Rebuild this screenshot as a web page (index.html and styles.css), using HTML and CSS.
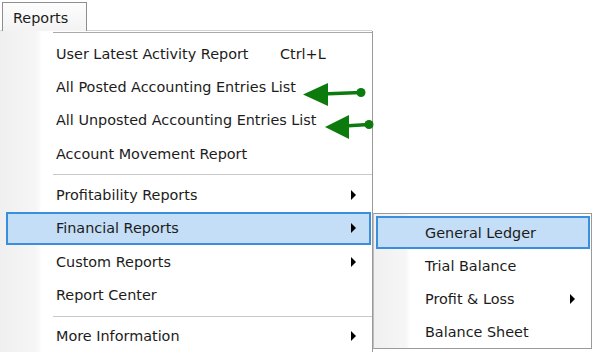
FILE: index.html
```html
<!DOCTYPE html>
<html lang="en">
<head>
	<meta charset="UTF-8">
	<title>Reports menu</title>
	<link rel="stylesheet" href="styles.css">
</head>
<body>
<!-- tab strip -->
	<div class="tabbar">
		<div class="tab">Reports</div>
	</div>
<!-- menus -->
	<div class="menus">
		<div class="menu main">
			<div class="menu-top"></div>
			<div class="item"><span class="label">User Latest Activity Report</span><span class="key">Ctrl+L</span></div>
			<div class="item"><span class="label">All Posted Accounting Entries List</span></div>
			<div class="item"><span class="label">All Unposted Accounting Entries List</span></div>
			<div class="item"><span class="label">Account Movement Report</span></div>
			<div class="sep"></div>
			<div class="item"><span class="label">Profitability Reports</span><span class="arrow"></span></div>
			<div class="item active"><span class="label">Financial Reports</span><span class="arrow"></span></div>
			<div class="item"><span class="label">Custom Reports</span><span class="arrow"></span></div>
			<div class="item"><span class="label">Report Center</span></div>
			<div class="sep"></div>
			<div class="item"><span class="label">More Information</span><span class="arrow"></span></div>
		</div>
		<div class="menu sub">
			<div class="item active"><span class="label">General Ledger</span></div>
			<div class="item"><span class="label">Trial Balance</span></div>
			<div class="item"><span class="label">Profit &amp; Loss</span><span class="arrow"></span></div>
			<div class="item"><span class="label">Balance Sheet</span></div>
		</div>
	</div>
<!-- green pointers -->
	<svg class="marks" width="592" height="352" viewBox="0 0 592 352">
		<g fill="#0d7a0d" stroke="#0d7a0d">
			<line x1="361" y1="92.5" x2="322" y2="94" stroke-width="3.5"/>
			<polygon points="303,94.5 328,83 328,106" stroke="none"/>
			<circle cx="361" cy="92.5" r="4.5" stroke="none"/>
			<line x1="369" y1="124.5" x2="344" y2="126" stroke-width="3.5"/>
			<polygon points="325,127 349,115 349,139" stroke="none"/>
			<circle cx="369" cy="124.5" r="4.5" stroke="none"/>
		</g>
	</svg>
</body>
</html>
```

FILE: styles.css
```css
*{
	margin:0;
	padding:0;
	box-sizing: border-box;
}
body{
	width: 592px;
	height: 352px;
	overflow: hidden;
	position: relative;
	background-color: #fff;
	font-family: "DejaVu Sans", Verdana, sans-serif;
	font-size: 14.4px;
	color: #1c1c1c;
}
/* tab strip */
.tabbar{
	width: 372px;
	height: 31px;
	padding: 2px 0 0 2px;
	border-bottom: 1px solid #d4d4d4;
}
.tab{
	width: 85px;
	height: 29px;
	padding-left: 10px;
	line-height: 30px;
	border: 1px solid #8e8e8e;
	border-bottom: none;
	background: linear-gradient(#fdfdfd, #f3f3f3);
}
/* menus */
.menus{
	display: flex;
	align-items: flex-start;
}
.menu{
	background: linear-gradient(to right, #efefef 0, #f6f6f6 36px, #fbfbfb 40px, #fff 41px);
}
.main{
	width: 373px;
	height: 330px;
	border-right: 1px solid #9a9a9a;
}
.menu-top{
	margin: 1px 0 0 53px;
	height: 5px;
	border-top: 1px solid #a9a9a9;
}
.item{
	display: flex;
	align-items: center;
	height: 33.33px;
	margin: 0 1px 0 6px;
	padding: 0 13px 0 48px;
	border: 2px solid transparent;
	white-space: nowrap;
}
.item.active{
	background-color: #c3def6;
	border-color: #3a8edc;
}
.main .label{
	flex: 0 0 224px;
}
.key{
	flex: 1;
}
.arrow{
	margin-left: auto;
	width: 0;
	height: 0;
	border-left: 5px solid #000;
	border-top: 5px solid transparent;
	border-bottom: 5px solid transparent;
}
.sep{
	height: 8px;
	margin-left: 53px;
	padding-top: 4px;
}
.sep:after{
	display: block;
	content: "";
	height: 1px;
	background-color: #c9c9c9;
}
.sub{
	width: 219px;
	margin-top: 182px;
	padding-top: 2px;
	border: 1px solid #9a9a9a;
	border-left-color: #bdbdbd;
	background: linear-gradient(to right, #f0f0f0 0, #f6f6f6 32px, #fff 36px);
}
.sub .item{
	height: 33px;
	margin: 0 1px 0 2px;
	padding-left: 47px;
}
/* green pointers */
.marks{
	position: absolute;
	left: 0;
	top: 0;
	pointer-events: none;
}
```
